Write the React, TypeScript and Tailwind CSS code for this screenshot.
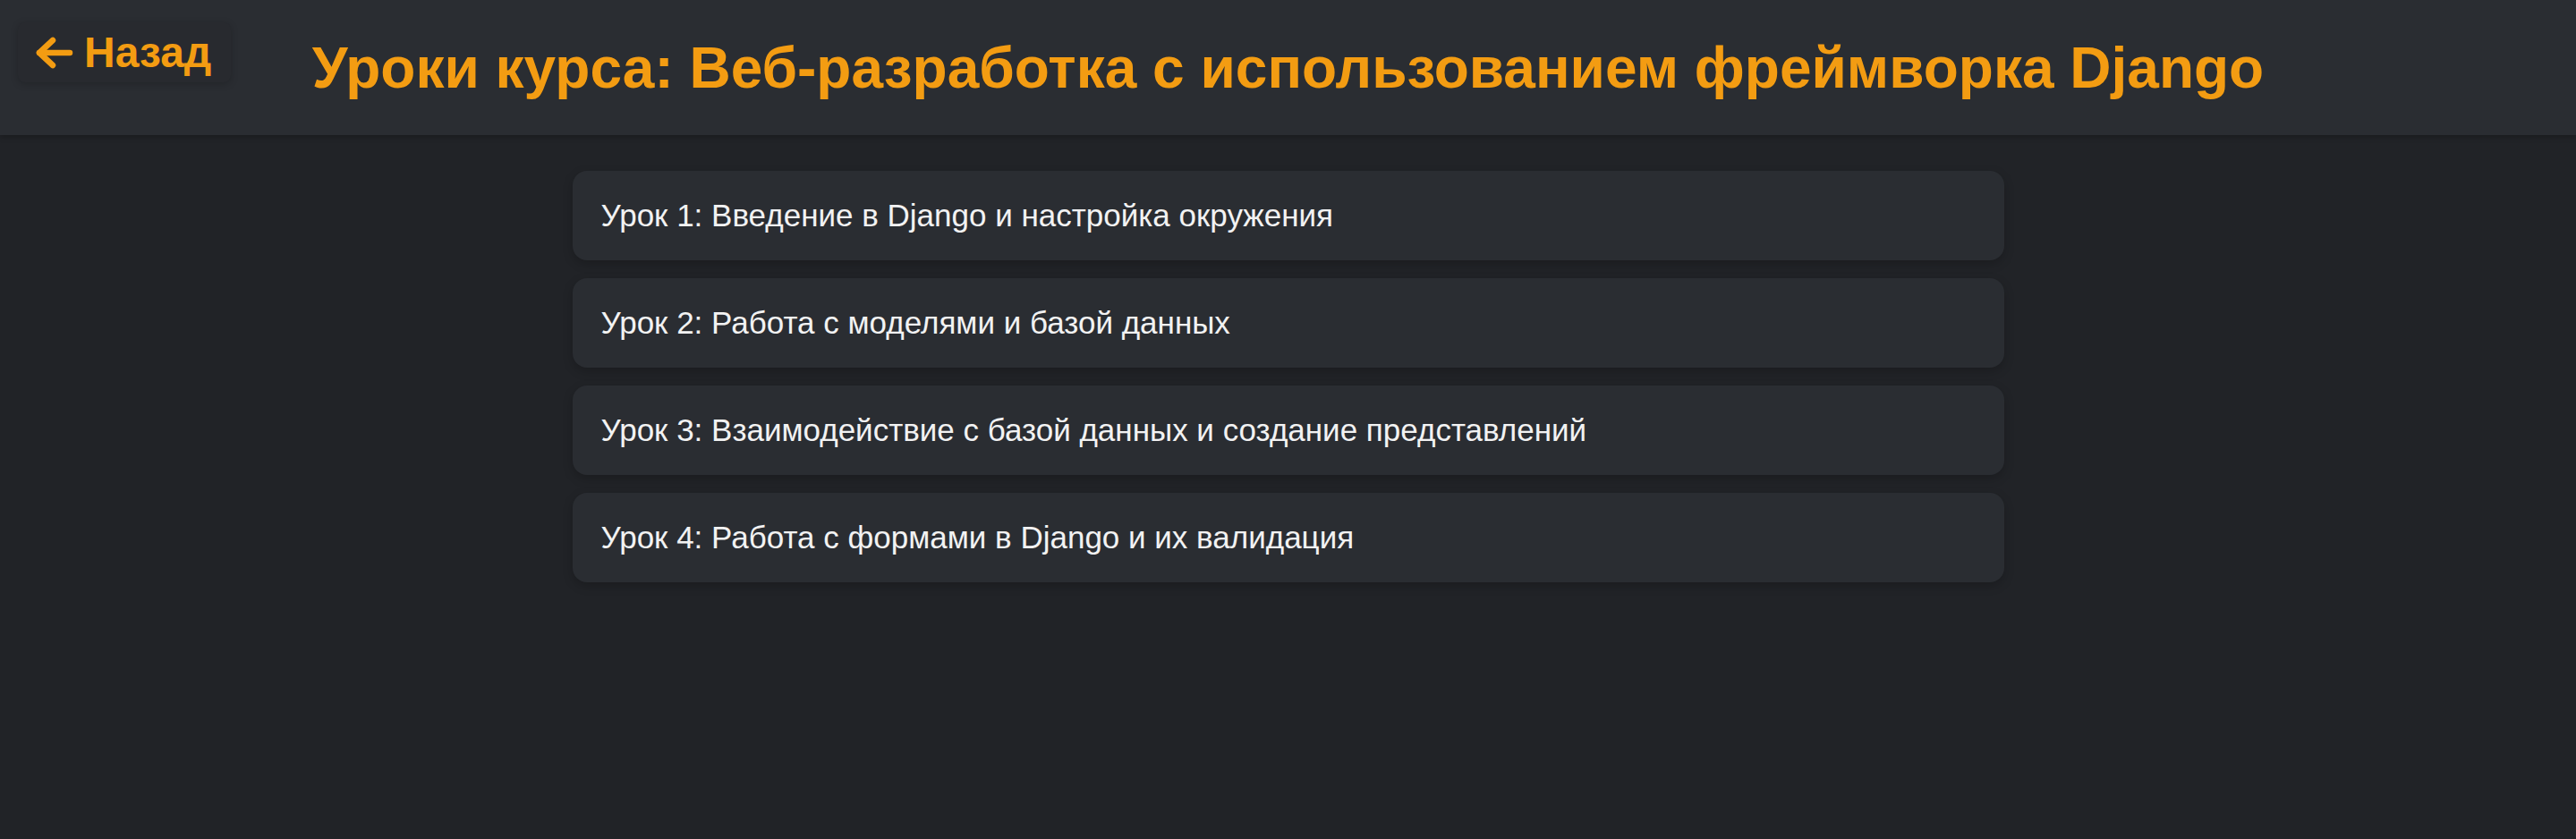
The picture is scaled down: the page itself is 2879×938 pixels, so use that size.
const lessons = [
  "Урок 1: Введение в Django и настройка окружения",
  "Урок 2: Работа с моделями и базой данных",
  "Урок 3: Взаимодействие с базой данных и создание представлений",
  "Урок 4: Работа с формами в Django и их валидация",
];

function ArrowLeft() {
  return (
    <svg width="42" height="36" viewBox="0 0 42 36" fill="none" stroke="currentColor" strokeWidth="6.5" strokeLinecap="round" strokeLinejoin="round">
      <path d="M4 18h34" />
      <path d="M19 4 4 18l15 14" />
    </svg>
  );
}

export default function App() {
  return (
    <div className="min-h-screen bg-[#212327] font-['Liberation_Sans',Arial,sans-serif]">
      <header className="grid h-[151px] grid-cols-[1fr_auto_1fr] bg-[#2a2d32] shadow-[0_2px_6px_rgba(0,0,0,0.25)]">
        <button className="mt-[25px] ml-5 flex h-[67px] items-center gap-3 self-start justify-self-start rounded-lg bg-[#282a2f] pl-5 pr-[22px] text-[48px] font-bold text-[#f39c12] shadow-[0_2px_8px_rgba(0,0,0,0.2)]">
          <ArrowLeft />
          <span className="leading-none">Назад</span>
        </button>
        <h1 className="self-center text-[64px] font-bold leading-none text-[#f39c12]">
          Уроки курса: Веб-разработка с использованием фреймворка Django
        </h1>
        <div />
      </header>
      <main className="mx-auto mt-10 flex w-[1600px] flex-col gap-5">
        {lessons.map((lesson) => (
          <div
            key={lesson}
            className="flex h-[100px] items-center rounded-2xl bg-[#2a2d32] px-8 text-[35px] text-[#f2f2f2] shadow-[0_4px_12px_rgba(0,0,0,0.2)]"
          >
            {lesson}
          </div>
        ))}
      </main>
    </div>
  );
}
